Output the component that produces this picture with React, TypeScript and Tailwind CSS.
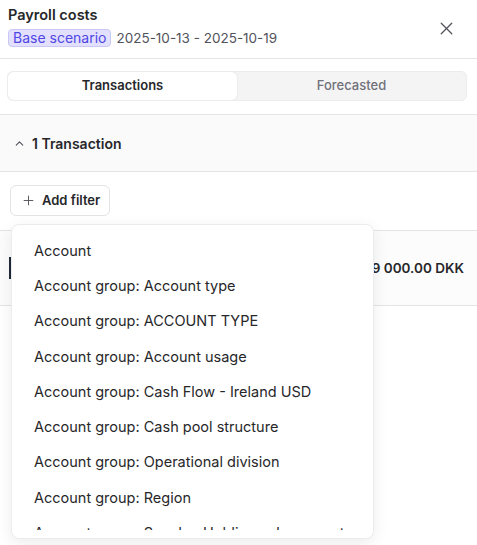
import React from 'react';
import { X, ChevronUp, Plus } from 'lucide-react';

const filterOptions = [
  'Account',
  'Account group: Account type',
  'Account group: ACCOUNT TYPE',
  'Account group: Account usage',
  'Account group: Cash Flow - Ireland USD',
  'Account group: Cash pool structure',
  'Account group: Operational division',
  'Account group: Region',
  'Account group: Sweden Holding subsegment',
];

export default function App() {
  return (
    <div
      className="relative w-[477px] h-[545px] overflow-hidden bg-white text-[#27272a]"
      style={{ fontFamily: 'Inter, "Noto Sans", sans-serif' }}
    >
      {/* Header */}
      <div className="flex items-start justify-between border-b border-[#e4e4e7] pl-2 pr-5 pt-[5px] h-[59px]">
        <div>
          <h1 className="text-[14.5px] font-semibold leading-[20px]">Payroll costs</h1>
          <div className="mt-[3px] flex items-center gap-[5px]">
            <span className="rounded-[4px] border border-[#c9c6f8] bg-[#e2e0fd] px-[4px] text-[14px] leading-[16px] text-[#4f46e5]">
              Base scenario
            </span>
            <span className="text-[13.5px] text-[#52525b]">2025-10-13 - 2025-10-19</span>
          </div>
        </div>
        <X size={21} strokeWidth={1.5} className="mt-[13px] text-[#52525b]" />
      </div>

      {/* Tabs */}
      <div className="pl-[7px] pr-[10px] pt-3 pb-[13px] border-b border-[#e4e4e7]">
        <div className="flex h-[30px] rounded-md border border-[#ececee] bg-[#f4f4f5]">
          <div className="flex flex-1 items-center justify-center rounded-md bg-white text-[13px] font-semibold shadow-[0_0_0_1px_#ececee]">
            Transactions
          </div>
          <div className="flex flex-1 items-center justify-center text-[13px] font-medium text-[#71717a]">
            Forecasted
          </div>
        </div>
      </div>

      {/* Section header */}
      <div className="flex h-[57px] items-center gap-[6px] border-b border-[#e4e4e7] bg-[#fafafa] pl-[13px]">
        <ChevronUp size={13} strokeWidth={2} className="text-[#52525b]" />
        <span className="text-[14px] font-semibold">1 Transaction</span>
      </div>

      {/* Filters */}
      <div className="px-[10px] pt-[13px] pb-[14px]">
        <button className="flex h-[31px] items-center gap-[6px] rounded-md border border-[#e4e4e7] bg-white pl-[10px] pr-[9px] text-[13px] font-semibold">
          <Plus size={15} strokeWidth={1.5} className="text-[#52525b]" />
          Add filter
        </button>
      </div>

      {/* Transaction row */}
      <div className="flex h-[76px] items-center justify-between border-y border-[#e4e4e7] bg-[#fcfcfc] pl-[9px] pr-[13px]">
        <div className="h-[22px] w-[2px] bg-[#1f2937]" />
        <span className="text-[13.5px] font-semibold">9 000.00 DKK</span>
      </div>

      {/* Filter dropdown */}
      <div className="absolute left-[11px] top-[224px] w-[363px] rounded-lg border border-[#ececee] bg-white py-[8px] shadow-[0_4px_16px_rgba(0,0,0,0.08)]">
        <div className="h-[297px] overflow-hidden">
          {filterOptions.map((option) => (
            <div key={option} className="flex h-[35.25px] items-center px-[22px] text-[14.5px] text-[#27272a]">
              {option}
            </div>
          ))}
        </div>
      </div>
    </div>
  );
}
